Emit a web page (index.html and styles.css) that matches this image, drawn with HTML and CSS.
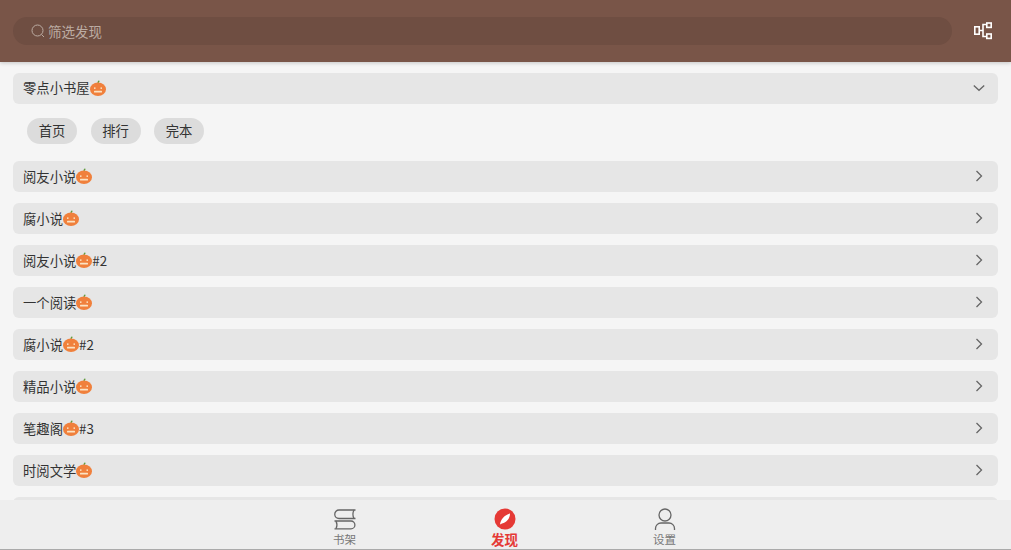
FILE: index.html
```html
<!DOCTYPE html>
<html lang="zh-CN">
<head>
    <meta charset="UTF-8">
    <meta name="viewport" content="width=device-width, initial-scale=1.0">
    <title>发现</title>
    <link rel="stylesheet" href="styles.css">
</head>
<body>

    <svg class="defs" width="0" height="0" aria-hidden="true">
        <symbol id="pumpkin" viewBox="0 0 16 16">
            <path d="M8 3.500C8 2.500 8.400 1.400 9.300 .8" fill="none" stroke="#5f9a3a" stroke-width="1.300"/>
            <ellipse cx="8" cy="9.200" rx="8" ry="6.800" fill="#f0803c"/>
            <rect x="4" y="7.400" width="1.500" height="1.500" fill="#fbe3c4"/>
            <rect x="10.500" y="7.400" width="1.500" height="1.500" fill="#fbe3c4"/>
            <rect x="4" y="10.800" width="8" height="1.800" rx=".6" fill="#fbe3c4"/>
        </symbol>
        <symbol id="right" viewBox="0 0 12 12">
            <path d="M3.500 1l5 5-5 5" fill="none" stroke="#666" stroke-width="1.300"/>
        </symbol>
    </svg>

    <header class="topbar">
        <div class="search">
            <svg class="search-icon" viewBox="0 0 14 14" width="14" height="14">
                <circle cx="6.500" cy="6.500" r="5.500" fill="none" stroke="#bcaca3" stroke-width="1"/>
                <path d="M10.500 10.500l2.500 2.500" stroke="#bcaca3" stroke-width="1"/>
            </svg>
            <span>筛选发现</span>
        </div>
        <svg class="layout-icon" viewBox="0 0 18 18" width="18" height="18">
            <g fill="none" stroke="#fff" stroke-width="1.600">
                <rect x=".8" y="4.800" width="4.400" height="7.400"/>
                <rect x="12.800" y="1" width="4.400" height="4.400"/>
                <rect x="12.800" y="12" width="4.400" height="4.400"/>
                <path d="M5.500 8.500H9M12 2.500H9V14.500H12"/>
            </g>
        </svg>
    </header>

    <main class="content">
        <div class="row">
            <span class="row-title">零点小书屋<svg class="pumpkin"><use href="#pumpkin"/></svg></span>
            <svg class="arrow" viewBox="0 0 12 12" width="12" height="12"><path d="M.800 3.500L6 8.300l5.200-4.800" fill="none" stroke="#666" stroke-width="1.300"/></svg>
        </div>
        <div class="tags">
            <span class="tag">首页</span>
            <span class="tag">排行</span>
            <span class="tag">完本</span>
        </div>
        <div class="list">
            <div class="row"><span class="row-title">阅友小说<svg class="pumpkin"><use href="#pumpkin"/></svg></span><svg class="arrow"><use href="#right"/></svg></div>
            <div class="row"><span class="row-title">腐小说<svg class="pumpkin"><use href="#pumpkin"/></svg></span><svg class="arrow"><use href="#right"/></svg></div>
            <div class="row"><span class="row-title">阅友小说<svg class="pumpkin"><use href="#pumpkin"/></svg>#2</span><svg class="arrow"><use href="#right"/></svg></div>
            <div class="row"><span class="row-title">一个阅读<svg class="pumpkin"><use href="#pumpkin"/></svg></span><svg class="arrow"><use href="#right"/></svg></div>
            <div class="row"><span class="row-title">腐小说<svg class="pumpkin"><use href="#pumpkin"/></svg>#2</span><svg class="arrow"><use href="#right"/></svg></div>
            <div class="row"><span class="row-title">精品小说<svg class="pumpkin"><use href="#pumpkin"/></svg></span><svg class="arrow"><use href="#right"/></svg></div>
            <div class="row"><span class="row-title">笔趣阁<svg class="pumpkin"><use href="#pumpkin"/></svg>#3</span><svg class="arrow"><use href="#right"/></svg></div>
            <div class="row"><span class="row-title">时阅文学<svg class="pumpkin"><use href="#pumpkin"/></svg></span><svg class="arrow"><use href="#right"/></svg></div>
            <div class="row"></div>
        </div>
    </main>

    <nav class="tabbar">
        <div class="tab">
            <svg viewBox="0 0 22 22" width="22" height="22">
                <g fill="none" stroke="#666" stroke-width="1.300">
                    <path d="M21.500 2H5a4 4 0 0 0 0 8.500h16.500"/>
                    <path d="M20 2c-1.300 2.500-1.300 6 0 8.500"/>
                    <path d="M.500 13H17a3.800 3.800 0 0 1 0 7.800H.500"/>
                    <path d="M2 13c1.200 2.500 1.200 5.300 0 7.800"/>
                </g>
            </svg>
            <span>书架</span>
        </div>
        <div class="tab tab-active">
            <svg viewBox="0 0 22 22" width="22" height="22">
                <circle cx="11" cy="11" r="10.500" fill="#e53935"/>
                <path d="M6 16.500C6.500 11.500 10.500 7 16 5.500C16 10.500 12.500 14.800 8 15.500z" fill="#fff"/>
            </svg>
            <span>发现</span>
        </div>
        <div class="tab">
            <svg viewBox="0 0 22 22" width="22" height="22">
                <g fill="none" stroke="#666" stroke-width="1.300">
                    <circle cx="11" cy="7" r="6"/>
                    <path d="M1.500 22v-1.500a5.500 5.500 0 0 1 5.500-5.500h8a5.500 5.500 0 0 1 5.500 5.500V22"/>
                </g>
            </svg>
            <span>设置</span>
        </div>
    </nav>

</body>
</html>
```

FILE: styles.css
```css
html, body {
    height: 100%;
}
body {
    margin: 0;
    height: 550px;
    display: flex;
    flex-direction: column;
    overflow: hidden;
    background-color: #f5f5f5;
    color: #333;
    font-family: "Noto Sans CJK SC", "Noto Sans", sans-serif;
    font-size: 13.33px;
}
.defs {
    position: absolute;
}
.topbar {
    flex: none;
    height: 62px;
    box-sizing: border-box;
    padding: 17px 19px 17px 13px;
    display: flex;
    align-items: center;
    gap: 22px;
    background-color: #795548;
    box-shadow: 0 1px 4px rgba(0, 0, 0, 0.2);
    position: relative;
}
.search {
    flex: 1;
    height: 28px;
    padding-left: 18px;
    display: flex;
    align-items: center;
    gap: 3px;
    border-radius: 14px;
    background-color: #6f4e42;
    color: #bcaca3;
    font-size: 13.5px;
}
.layout-icon {
    flex: none;
}
.content {
    flex: 1;
    min-height: 0;
    overflow: hidden;
    padding: 11px 13px 0;
}
.row {
    height: 30.5px;
    box-sizing: border-box;
    padding: 0 13px 0 10px;
    display: flex;
    align-items: center;
    justify-content: space-between;
    border-radius: 6px;
    background-color: #e6e6e6;
}
.row-title {
    display: flex;
    align-items: center;
    margin-top: -1px;
}
.pumpkin {
    width: 16px;
    height: 16px;
}
.arrow {
    width: 12px;
    height: 12px;
}
.tags {
    padding: 14px 14px 17.5px;
    display: flex;
    gap: 13.5px;
}
.tag {
    width: 50px;
    height: 26px;
    padding-bottom: 1px;
    box-sizing: border-box;
    display: flex;
    align-items: center;
    justify-content: center;
    border-radius: 13px;
    background-color: #dcdcdc;
}
.list {
    display: flex;
    flex-direction: column;
    gap: 11.5px;
}
.list .row-title {
    margin-top: 0;
}
.tabbar {
    flex: none;
    height: 50px;
    box-sizing: border-box;
    padding: 8px 2px 0 0;
    display: flex;
    justify-content: center;
    gap: 104px;
    background-color: #eeeeee;
    border-bottom: 1px solid #aaa;
}
.tab {
    width: 56px;
    display: flex;
    flex-direction: column;
    align-items: center;
    gap: 2px;
    color: #777;
    font-size: 11.5px;
    line-height: 14px;
}
.tab-active {
    color: #e53935;
    font-size: 13.5px;
    font-weight: 700;
}
```
